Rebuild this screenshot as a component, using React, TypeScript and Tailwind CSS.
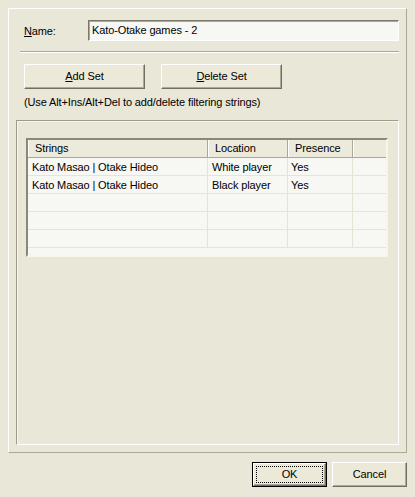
import React from 'react'

const rows = [
  { str: 'Kato Masao | Otake Hideo', loc: 'White player', pres: 'Yes' },
  { str: 'Kato Masao | Otake Hideo', loc: 'Black player', pres: 'Yes' },
  { str: '', loc: '', pres: '' },
  { str: '', loc: '', pres: '' },
  { str: '', loc: '', pres: '' },
]

function Button({ children, w, isDefault }: { children: React.ReactNode; w: string; isDefault?: boolean }) {
  if (isDefault) {
    return (
      <div className={`${w} h-[25px] border border-black bg-[#ece9d8] p-0`}>
        <div className="h-full w-full border border-t-white border-l-white border-r-[#716f64] border-b-[#716f64] shadow-[inset_-1px_-1px_0_#aca899] p-[2px]">
          <div className="h-full w-full border border-dotted border-black flex items-center justify-center">{children}</div>
        </div>
      </div>
    )
  }
  return (
    <div
      className={`${w} h-[25px] border border-t-white border-l-white border-r-[#716f64] border-b-[#716f64] shadow-[inset_-1px_-1px_0_#aca899] bg-[#ece9d8] flex items-center justify-center`}
    >
      {children}
    </div>
  )
}

export default function App() {
  return (
    <div
      className="w-[415px] h-[497px] bg-[#e9e7d8] text-black text-[11px] leading-[13px] tracking-[-0.12px] overflow-hidden"
      style={{ fontFamily: '"Liberation Sans", Arial, sans-serif' }}
    >
      <div className="pt-2 px-2">
        {/* Main panel */}
        <div className="h-[445px] border border-t-white border-l-white border-r-[#aca899] border-b-[#aca899] flex flex-col">
          {/* Name row */}
          <div className="flex items-center mt-[11px] pl-[15px] pr-[7px]">
            <span className="w-[64px] pt-[1px]">
              <u>N</u>ame:
            </span>
            <div className="flex-1 h-[21px] border border-t-[#7a7866] border-l-[#7a7866] border-r-white border-b-white shadow-[inset_1px_1px_0_#aca899] bg-[#f7f7f4] flex items-center pl-[3px]">
              Kato-Otake games - 2
            </div>
          </div>

          {/* Separator */}
          <div className="mt-[10px] ml-[11px] mr-[7px] h-[2px] border-t border-t-[#aca899] border-b border-b-white" />

          {/* Buttons */}
          <div className="flex gap-[16px] mt-[11px] pl-[15px]">
            <Button w="w-[121px]">
              <span><u>A</u>dd Set</span>
            </Button>
            <Button w="w-[121px]">
              <span><u>D</u>elete Set</span>
            </Button>
          </div>

          <p className="mt-[7px] pl-[15px]">(Use Alt+Ins/Alt+Del to add/delete filtering strings)</p>

          {/* Group box */}
          <div className="mt-[11px] ml-[7px] mr-[7px] h-[325px] border border-t-[#9d9b8a] border-l-[#9d9b8a] border-r-white border-b-white shadow-[inset_1px_1px_0_#f6f5ee]">
            <div className="mt-[17px] ml-[9px] mr-[10px] h-[119px] border-2 border-t-[#8a8876] border-l-[#8a8876] border-r-[#f7f5ec] border-b-[#f7f5ec] bg-[#f7f7f4] overflow-hidden">
              {/* Header */}
              <div className="flex h-[18px] bg-[#ebeadb] border-b border-b-[#aca899]">
                <div className="w-[180px] pl-[6px] flex items-center border-l border-l-white border-r border-r-[#aca899]">Strings</div>
                <div className="w-[80px] pl-[6px] flex items-center border-l border-l-white border-r border-r-[#aca899]">Location</div>
                <div className="w-[65px] pl-[6px] flex items-center border-l border-l-white border-r border-r-[#aca899]">Presence</div>
                <div className="flex-1 border-l border-l-white" />
              </div>
              {/* Rows */}
              {rows.map((r, i) => (
                <div key={i} className="flex h-[18px] border-b border-b-[#e6e4d6]">
                  <div className="w-[180px] pl-[4px] pt-[1px] flex items-center border-r border-r-[#e6e4d6]">{r.str}</div>
                  <div className="w-[80px] pl-[4px] pt-[1px] flex items-center border-r border-r-[#e6e4d6]">{r.loc}</div>
                  <div className="w-[65px] pl-[3px] pt-[1px] flex items-center border-r border-r-[#e6e4d6]">{r.pres}</div>
                  <div className="flex-1" />
                </div>
              ))}
            </div>
          </div>
        </div>

        {/* Dialog buttons */}
        <div className="flex justify-end gap-[5px] mt-[9px]">
          <Button w="w-[75px]" isDefault>
            OK
          </Button>
          <Button w="w-[75px]">Cancel</Button>
        </div>
      </div>
    </div>
  )
}
